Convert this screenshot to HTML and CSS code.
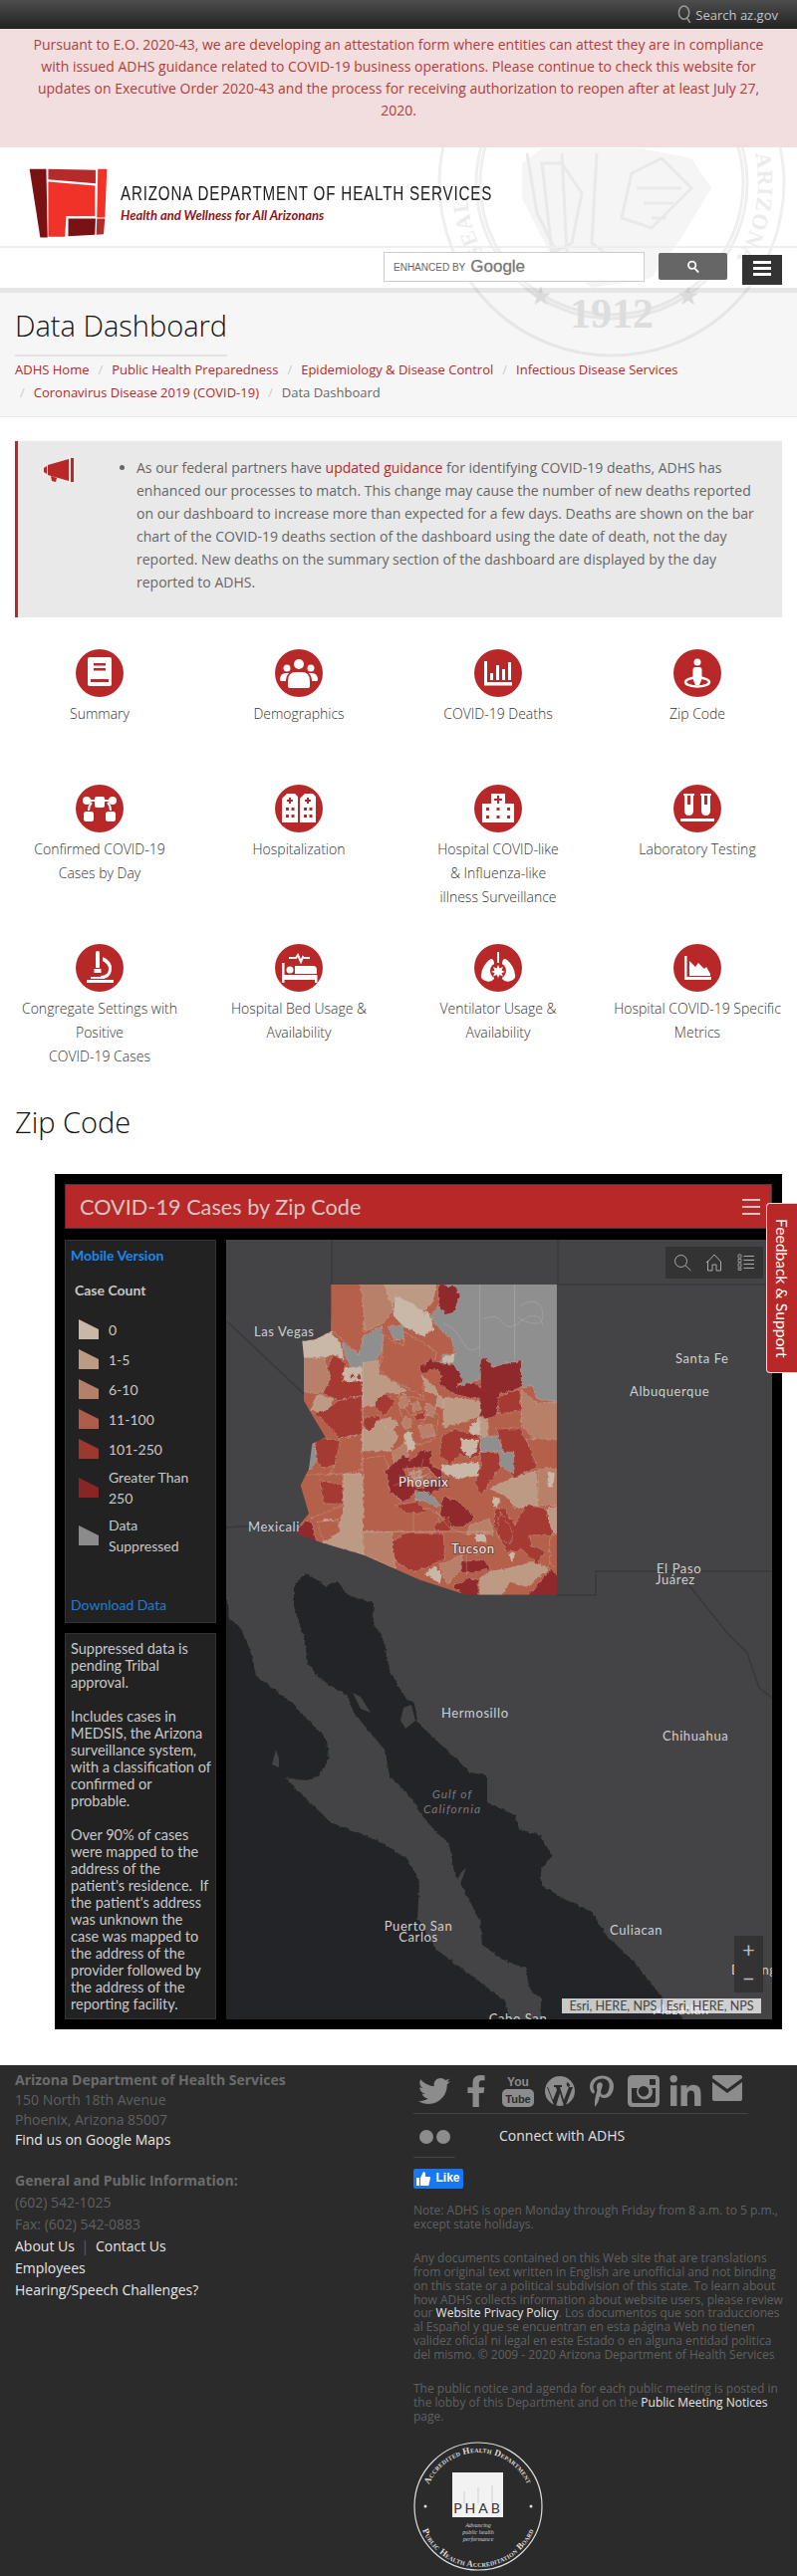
FILE: index.html
```html
<!DOCTYPE html>
<html lang="en">
<head>
    <meta charset="UTF-8">
    <meta name="viewport" content="width=device-width, initial-scale=1.0">
    <title>Data Dashboard</title>
    <link rel="stylesheet" href="styles.css">
</head>
<body>
    <div class="topbar">
        <svg class="topbar-icon" viewBox="0 0 16 20"><ellipse cx="7" cy="8" rx="5.5" ry="7"/><path d="M10.5 14l3 5"/></svg>
        <span>Search az.gov</span>
    </div>

    <div class="alert">
        <p>Pursuant to E.O. 2020-43, <a href="#">we are developing an attestation form where entities can attest they are in compliance with issued ADHS guidance related to COVID-19 business operations. Please continue to check this website for updates on Executive Order 2020-43 and the process for receiving authorization to reopen after at least July 27, 2020.</a></p>
    </div>

    <div class="masthead">
        <svg class="seal-mark" viewBox="0 0 360 360">
            <defs>
                <path id="seal-left" d="M52 252A146 146 0 0 1 38 150"/>
                <path id="seal-right" d="M324 150A146 146 0 0 1 298 266"/>
            </defs>
            <circle cx="180" cy="180" r="173"/>
            <circle cx="180" cy="180" r="136"/>
            <circle cx="180" cy="180" r="132"/>
            <text class="seal-ring-text"><textPath href="#seal-left">SEAL</textPath></text>
            <text class="seal-ring-text"><textPath href="#seal-right">ARIZONA</textPath></text>
            <path class="seal-scene" d="M90 160l20-15 100 0 50 10 20 30-30 50-30 40-60 10-40-30-30-60z"/>
            <path class="seal-detail" d="M95 150l10 60 30 60M130 150l5 100M165 150l-5 90 40 30M200 170l30-15 30 30-40 40-30-10zM205 185h45M212 200h30M220 215h15M110 160l20 0 20 30-10 50-20 10z"/>
            <text class="seal-year" x="180" y="325" text-anchor="middle">1912</text>
            <text class="seal-star" x="108" y="302" text-anchor="middle">★</text>
            <text class="seal-star" x="256" y="302" text-anchor="middle">★</text>
        </svg>

        <div class="brand">
            <svg class="brand-logo" viewBox="20 30 245 214">
                <polygon fill="#7a1214" points="28,35 78,35 82,240 60,240"/>
                <polygon fill="#b52b2b" points="84,35 226,38 226,78 84,66"/>
                <polygon fill="#f03228" points="84,73 224,85 224,176 138,176 134,238 84,238"/>
                <polygon fill="#f03228" points="233,35 260,35 254,180 230,180"/>
                <polygon fill="#7a1214" points="144,183 226,183 224,232 144,236"/>
                <polygon fill="#b52b2b" points="230,183 254,183 250,230 228,232"/>
            </svg>
            <div class="brand-text">
                <div class="brand-name">ARIZONA DEPARTMENT OF HEALTH SERVICES</div>
                <div class="brand-tag">Health and Wellness for All Arizonans</div>
            </div>
        </div>

        <div class="search-row">
            <div class="search-input"><span class="enhanced">ENHANCED BY</span> <span class="google">Google</span></div>
            <button class="search-btn" type="button">
                <svg viewBox="0 0 16 16" width="14" height="14"><circle cx="6.5" cy="6" r="4.2"/><path d="M9.5 9.5l4.5 5"/></svg>
            </button>
            <button class="menu-btn" type="button"><span></span><span></span><span></span></button>
        </div>

        <div class="title-band">
            <h1>Data Dashboard</h1>
            <div class="crumbs">
                <a href="#">ADHS Home</a><i>/</i><a href="#">Public Health Preparedness</a><i>/</i><a href="#">Epidemiology &amp; Disease Control</a><i>/</i><a href="#">Infectious Disease Services</a><br>
                <i class="first">/</i><a href="#">Coronavirus Disease 2019 (COVID-19)</a><i>/</i><span>Data Dashboard</span>
            </div>
        </div>
    </div>

    <div class="notice">
        <svg class="notice-icon" viewBox="0 0 31 24"><path d="M0 10l3-2v8l-3-2zM4 7l21-6v22l-21-6zM7 18l6 2-1 4-4-1zM27 0h3v24h-3z"/></svg>
        <ul>
            <li>As our federal partners have <a href="#">updated guidance</a> for identifying COVID-19 deaths, ADHS has enhanced our processes to match. This change may cause the number of new deaths reported on our dashboard to increase more than expected for a few days. Deaths are shown on the bar chart of the COVID-19 deaths section of the dashboard using the date of death, not the day reported. New deaths on the summary section of the dashboard are displayed by the day reported to ADHS.</li>
        </ul>
    </div>

    <div class="tiles">
        <a class="tile" href="#">
            <svg class="tile-icon" viewBox="0 0 48 48"><circle class="disc" cx="24" cy="24" r="24"/><path class="ink" d="M14 8h20q2 0 2 2v25q0 2-2 2H14q-2 0-2-2V10q0-2 2-2z"/><path class="cut" d="M18 14h12v2.500H18zM18 19h12v2.500H18zM15 30h18v3H15z"/></svg>
            <span>Summary</span>
        </a>
        <a class="tile" href="#">
            <svg class="tile-icon" viewBox="0 0 48 48"><circle class="disc" cx="24" cy="24" r="24"/><circle class="ink" cx="24" cy="15" r="5"/><circle class="ink" cx="12" cy="19" r="3.500"/><circle class="ink" cx="36" cy="19" r="3.500"/><path class="ink" d="M5 31q0-7 6-7h3q-3 3-3 8H7q-2 0-2-1zM43 31q0-7-6-7h-3q3 3 3 8h4q2 0 2-1zM13 37v-5q0-9 8-9h6q8 0 8 9v5q0 2-2 2H15q-2 0-2-2z"/></svg>
            <span>Demographics</span>
        </a>
        <a class="tile" href="#">
            <svg class="tile-icon" viewBox="0 0 48 48"><circle class="disc" cx="24" cy="24" r="24"/><path class="ink" d="M10 12h3v21h25v3.500H10zM16 24h3v7h-3zM22 16h3v15h-3zM28 20h3v11h-3zM34 13h3v18h-3z"/></svg>
            <span>COVID-19 Deaths</span>
        </a>
        <a class="tile" href="#">
            <svg class="tile-icon" viewBox="0 0 48 48"><circle class="disc" cx="24" cy="24" r="24"/><circle class="ink" cx="24" cy="13" r="3.500"/><path class="ink" d="M22 18h4q2.500 0 2.500 2.500V30L26 36h-4l-2.500-6v-9.500Q19.500 18 22 18z"/><ellipse class="ring" cx="24" cy="33" rx="12" ry="4.500"/></svg>
            <span>Zip Code</span>
        </a>

        <a class="tile" href="#">
            <svg class="tile-icon" viewBox="0 0 48 48"><circle class="disc" cx="24" cy="24" r="24"/><rect class="ink" x="19" y="12" width="10" height="11" rx="2"/><circle class="ink" cx="11" cy="16" r="4"/><circle class="ink" cx="37" cy="16" r="4"/><rect class="ink" x="8" y="27" width="10" height="10" rx="2.500"/><rect class="ink" x="30" y="27" width="10" height="10" rx="2.500"/><path class="line" d="M15 16h4M29 16h4M16 18q-3 3-3 8M32 18q3 3 3 8"/></svg>
            <span>Confirmed COVID-19<br>Cases by Day</span>
        </a>
        <a class="tile" href="#">
            <svg class="tile-icon" viewBox="0 0 48 48"><circle class="disc" cx="24" cy="24" r="24"/><path class="ink" d="M9 12l3-3h8l3 3v26H7V14zM27 12l3-3h8l3 3v26H25V14z"/><path class="cut" d="M14 13h2v2h2v2h-2v2h-2v-2h-2v-2h2zM32 13h2v2h2v2h-2v2h-2v-2h-2v-2h2zM11 23h3v3h-3zM16.500 23h3v3h-3zM11 30h3v3h-3zM16.500 30h3v3h-3zM29 23h3v3h-3zM34.500 23h3v3h-3zM29 30h3v3h-3zM34.500 30h3v3h-3z"/></svg>
            <span>Hospitalization</span>
        </a>
        <a class="tile" href="#">
            <svg class="tile-icon" viewBox="0 0 48 48"><circle class="disc" cx="24" cy="24" r="24"/><path class="ink" d="M17 9h14v10h9v19H8V19h9z"/><path class="cut" d="M23 11h2v3h3v2h-3v3h-2v-3h-3v-2h3zM12 23h3v3h-3zM22.500 23h3v3h-3zM33 23h3v3h-3zM12 31h3v3h-3zM22.500 31h3v3h-3zM33 31h3v3h-3z"/></svg>
            <span>Hospital COVID-like<br>&amp; Influenza-like<br>illness Surveillance</span>
        </a>
        <a class="tile" href="#">
            <svg class="tile-icon" viewBox="0 0 48 48"><circle class="disc" cx="24" cy="24" r="24"/><path class="ink" d="M10 9h11v2h-1v15q0 5-4.500 5T11 26V11h-1zM27 9h11v2h-1v15q0 5-4.500 5T28 26V11h-1zM7 34h34v3H7z"/><path class="cut" d="M14 11h3v9h-3zM31 11h3v9h-3z"/></svg>
            <span>Laboratory Testing</span>
        </a>

        <a class="tile" href="#">
            <svg class="tile-icon" viewBox="0 0 48 48"><circle class="disc" cx="24" cy="24" r="24"/><path class="ink" d="M20 9q0-2 2-2t2 2v15h-4zM18.500 25h7v4h-7zM27 13q10 4 9 13t-11 9v-3q8 0 8-7 0-5-6-8zM11 36h27v3H11z"/><path class="ink" d="M15 33h14v2H15z"/></svg>
            <span>Congregate Settings with<br>Positive<br>COVID-19 Cases</span>
        </a>
        <a class="tile" href="#">
            <svg class="tile-icon" viewBox="0 0 48 48"><circle class="disc" cx="24" cy="24" r="24"/><path class="line" d="M14 14h7l2-3 3 7 2-5 1 1h6"/><path class="ink" d="M7 19h2.500v12h32q1 0 1 1v7H40v-3H9.500v3H7z"/><circle class="ink" cx="15" cy="26" r="3.500"/><path class="ink" d="M20 22h18q4 0 4 4v4H20z"/></svg>
            <span>Hospital Bed Usage &amp;<br>Availability</span>
        </a>
        <a class="tile" href="#">
            <svg class="tile-icon" viewBox="0 0 48 48"><circle class="disc" cx="24" cy="24" r="24"/><path class="line" d="M24 8v11"/><path class="ink" d="M15 16q4-3 5 3v16q-3 4-9 2-5-2-4-6 1-9 8-15zM33 16q-4-3-5 3v16q3 4 9 2 5-2 4-6-1-9-8-15z"/><circle class="cut" cx="24" cy="27" r="8"/><path class="ink" d="M24 21l1.500 3.500 3.500-1.500-1.500 3.500L31 28l-3.500 1 1.500 3.500-3.500-1.500L24 34l-1.500-3-3.500 1.500 1.500-3.500L17 28l3.500-1.500L19 23l3.500 1.500z"/></svg>
            <span>Ventilator Usage &amp;<br>Availability</span>
        </a>
        <a class="tile" href="#">
            <svg class="tile-icon" viewBox="0 0 48 48"><circle class="disc" cx="24" cy="24" r="24"/><path class="ink" d="M11 12h2.500v21H38v3H11zM16 17l6 6 3-4 6 6 2-2 4 7v2H16z"/></svg>
            <span>Hospital COVID-19 Specific<br>Metrics</span>
        </a>
    </div>

    <h2 class="section-title">Zip Code</h2>

    <div class="embed">
        <div class="embed-header">
            <span>COVID-19 Cases by Zip Code</span>
            <div class="embed-menu"><i></i><i></i><i></i></div>
        </div>
        <div class="embed-body">
            <div class="side">
                <div class="panel legend">
                    <a class="mobile-link" href="#">Mobile Version</a>
                    <div class="legend-title">Case Count</div>
                    <div class="legend-row"><i class="swatch s0"></i><span>0</span></div>
                    <div class="legend-row"><i class="swatch s1"></i><span>1-5</span></div>
                    <div class="legend-row"><i class="swatch s2"></i><span>6-10</span></div>
                    <div class="legend-row"><i class="swatch s3"></i><span>11-100</span></div>
                    <div class="legend-row"><i class="swatch s4"></i><span>101-250</span></div>
                    <div class="legend-row tall"><i class="swatch s5"></i><span>Greater Than<br>250</span></div>
                    <div class="legend-row tall"><i class="swatch s6"></i><span>Data<br>Suppressed</span></div>
                    <a class="download-link" href="#">Download Data</a>
                </div>
                <div class="panel notes">
                    <p>Suppressed data is<br>pending Tribal<br>approval.</p>
                    <p>Includes cases in<br>MEDSIS, the Arizona<br>surveillance system,<br>with a classification of<br>confirmed or<br>probable.</p>
                    <p>Over 90% of cases<br>were mapped to the<br>address of the<br>patient's residence.&nbsp; If<br>the patient's address<br>was unknown the<br>case was mapped to<br>the address of the<br>provider followed by<br>the address of the<br>reporting facility.</p>
                </div>
            </div>

            <div class="map">
                <svg class="map-svg" viewBox="227 1245 548 783" width="548" height="783">
                    <defs>
                        <filter id="rough" x="-5%" y="-5%" width="110%" height="110%" color-interpolation-filters="sRGB">
                            <feTurbulence type="fractalNoise" baseFrequency="0.2" numOctaves="3" seed="4"/>
                            <feDisplacementMap in="SourceGraphic" scale="4" xChannelSelector="R" yChannelSelector="G"/>
                        </filter>
                        <filter id="rough-az" x="-5%" y="-5%" width="110%" height="110%" color-interpolation-filters="sRGB">
                            <feTurbulence type="fractalNoise" baseFrequency="0.08" numOctaves="4" seed="9"/>
                            <feDisplacementMap in="SourceGraphic" scale="14" xChannelSelector="R" yChannelSelector="G"/>
                        </filter>
                        <clipPath id="az-clip">
                            <polygon points="22,15 702,15 702,950 430,950 290,905 120,830 0,795 -85,765 -70,735 -45,705 -70,620 -45,570 -35,495 5,475 -25,425 -60,365 -60,235 -65,185 -25,180 22,155"/>
                        </clipPath>
                    </defs>

                    <!-- sea -->
                    <g class="sea" filter="url(#rough)">
                        <polygon points="307,1580 295,1593 295,1613 306,1647 309,1670 320,1685 349,1703 355,1720 374,1743 386,1757 391,1783 416,1810 426,1827 451,1853 456,1880 472,1910 482,1930 484,1953 503,1967 528,1977 531,1997 543,2007 543,2030 688,2030 660,2000 636,1970 608,1943 594,1920 566,1907 543,1893 543,1877 554,1863 542,1843 521,1837 517,1823 489,1810 489,1783 472,1780 451,1760 419,1730 416,1710 405,1703 391,1677 386,1650 374,1627 375,1610 349,1602 339,1588 328,1593"/>
                        <polygon points="220,1620 241,1633 251,1657 257,1683 293,1710 328,1747 330,1767 321,1783 307,1788 286,1785 311,1810 332,1830 356,1840 377,1847 409,1867 421,1890 419,1927 437,1957 472,1983 507,2010 512,2030 220,2030"/>
                        <polygon points="220,1600 229,1607 230,1640 220,1640"/>
                    </g>
                    <g class="land">
                        <polygon points="354,1700 362,1704 372,1720 362,1716"/>
                        <polygon points="405,1715 413,1712 417,1728 407,1736 402,1728"/>
                        <polygon points="277,1757 280,1766 280,1775 273,1772"/>
                        <polygon points="463,1880 468,1876 462,1892 458,1890"/>
                    </g>

                    <!-- boundaries -->
                    <path class="boundary" d="M333 1245V1290M560 1245V1290H775M228 1327L305 1400M227 1534L298 1530M559 1602H598V1578H775M690 1590L730 1640 750 1660 762 1695 775 1705"/>

                    <!-- Arizona, drawn in zip areas -->
                    <g transform="translate(325 1285) scale(.3333)" clip-path="url(#az-clip)">
                        <g class="zips" filter="url(#rough-az)">
                            <rect class="c3" x="-100" y="0" width="820" height="960"/>
                            <polygon class="c3" points="10,5 110,5 130,60 120,150 115,200 105,225 60,185 22,150"/>
                            <polygon class="c2" points="110,5 180,5 210,90 180,130 125,155 120,100"/>
                            <polygon class="c1" points="180,5 340,5 330,65 300,100 250,70 215,50 205,80"/>
                            <polygon class="c0" points="215,50 260,70 300,100 320,100 330,150 300,170 240,140 210,110"/>
                            <polygon class="c6" points="55,190 105,225 120,170 175,140 180,200 165,235 125,265 85,265 65,230"/>
                            <polygon class="c6" points="190,140 240,140 245,180 215,180"/>
                            <polygon class="c0" points="-80,185 -25,180 22,155 55,205 60,240 30,225 -30,240 -80,240"/>
                            <polygon class="c0" points="55,265 115,265 115,305 60,305"/>
                            <polygon class="c4" points="75,295 85,280 95,295"/>
                            <polygon class="c4" points="100,295 110,285 113,300"/>
                            <polygon class="c3" points="180,165 215,190 240,200 245,160 300,190 340,220 330,260 290,265 300,300 300,355 260,330 200,300 165,270 175,235"/>
                            <polygon class="c6" points="340,90 375,5 720,5 720,370 640,360 630,320 595,325 595,245 535,255 505,265 485,235 470,300 440,310 410,325 415,295 350,250 360,225 395,225 385,180 340,140 320,110"/>
                            <polygon class="c5" points="345,5 375,20 395,20 410,50 390,100 370,105 345,80"/>
                            <polygon class="c1" points="115,250 165,245 170,285 230,320 250,335 220,345 190,340 160,380 115,385"/>
                            <polygon class="c1" points="360,355 470,365 470,415 360,445"/>
                            <polygon class="c0" points="440,445 470,415 470,470 440,470"/>
                            <polygon class="c1" points="115,450 175,420 225,470 200,515 115,520"/>
                            <polygon class="c3" points="225,350 300,360 345,410 340,480 280,500 240,440"/>
                            <polygon class="c2" points="240,345 262,365 240,390 222,372"/>
                            <polygon class="c2" points="262,372 285,365 292,390 270,402"/>
                            <polygon class="c2" points="310,370 338,385 330,415 305,405"/>
                            <polygon class="c2" points="245,410 268,425 255,450 235,440"/>
                            <polygon class="c4" points="272,410 305,395 305,420 278,422"/>
                            <polygon class="c2" points="285,440 325,435 335,470 295,480"/>
                            <polygon class="c1" points="170,425 205,415 225,440 195,460"/>
                            <polygon class="c5" points="472,245 490,235 510,265 535,255 595,245 595,325 565,335 530,345 520,410 490,420 472,410 470,360 430,355 395,345 355,320 345,310 360,290 335,270 295,285 290,265 320,240 355,255 390,255 420,300 400,325 445,310 472,325"/>
                            <polygon class="c4" points="155,365 185,345 215,365 185,410 155,385"/>
                            <polygon class="c4" points="120,415 170,410 150,445 130,460 120,440"/>
                            <polygon class="c1" points="340,340 360,360 360,385 340,385"/>
                            <polygon class="c1" points="295,290 340,330 345,350 310,340"/>
                            <polygon class="c1" points="470,415 495,420 495,475 470,470"/>
                            <polygon class="c4" points="355,470 400,450 470,475 470,530 440,540 410,525 380,555 350,530"/>
                            <polygon class="c0" points="415,480 465,480 460,520 435,535 415,510"/>
                            <polygon class="c0" points="240,465 265,460 275,510 250,515"/>
                            <polygon class="c2" points="205,520 250,490 255,530 215,570"/>
                            <polygon class="c0" points="360,235 390,225 392,250 358,250"/>
                            <polygon class="c4" points="10,270 30,225 65,255 55,305 115,308 115,350 45,365 0,345"/>
                            <polygon class="c4" points="-30,400 0,395 45,365 115,350 115,465 50,480 0,425"/>
                            <polygon class="c2" points="-70,235 0,235 20,300 0,340 -70,340"/>
                            <polygon class="c1" points="-20,345 30,360 10,395 -40,395"/>
                            <polygon class="c4" points="-25,480 10,480 75,490 40,530 40,555 0,570 -20,550"/>
                            <polygon class="c6" points="-60,495 -30,490 -20,540 -40,575 -70,560"/>
                            <polygon class="c3" points="50,480 115,465 115,575 60,585 20,590 40,530"/>
                            <polygon class="c3" points="-90,590 60,585 60,680 -40,720 -90,640"/>
                            <polygon class="c4" points="-10,605 55,620 60,675 0,675"/>
                            <polygon class="c1" points="60,585 115,585 120,690 150,690 115,760 120,830 0,795 0,720 50,730 60,680"/>
                            <polygon class="c5" points="-100,770 -50,725 -35,735 -20,800"/>
                            <polygon class="c3" points="-20,730 45,725 50,760 0,790"/>
                            <polygon class="c3" points="118,540 180,530 200,575 200,640 260,690 320,690 350,710 330,760 118,760"/>
                            <polygon class="c2" points="118,760 205,760 215,870 120,830"/>
                            <polygon class="c5" points="185,575 240,530 260,545 295,515 325,520 320,555 355,575 360,620 320,650 275,635 260,660 240,670 200,640"/>
                            <polygon class="c3" points="240,570 310,565 345,600 300,630 260,620"/>
                            <polygon class="c2" points="260,580 290,575 300,610 270,612"/>
                            <polygon class="c4" points="215,680 280,670 310,700 250,705"/>
                            <polygon class="c5" points="360,655 400,665 455,715 420,745 385,745 350,705"/>
                            <polygon class="c4" points="330,745 375,715 385,755 335,755"/>
                            <polygon class="c6" points="275,640 310,640 340,665 350,685 325,680 300,665 275,665"/>
                            <polygon class="c4" points="205,790 240,765 360,765 365,840 320,865 270,880 215,850"/>
                            <polygon class="c0" points="305,885 335,865 355,890 350,915"/>
                            <polygon class="c0" points="355,560 410,555 465,550 470,590 400,600 355,580"/>
                            <polygon class="c4" points="520,450 590,450 640,540 640,565 575,600 540,555 500,610 475,650 455,610 475,560 470,520 540,520 530,480"/>
                            <polygon class="c6" points="472,475 525,470 540,515 472,520"/>
                            <polygon class="c6" points="530,520 572,520 572,585 530,560"/>
                            <polygon class="c1" points="500,630 560,600 640,575 645,680 580,690 545,650"/>
                            <polygon class="c0" points="510,655 530,660 525,685 510,680"/>
                            <polygon class="c2" points="595,330 640,370 720,370 720,480 640,490 595,440"/>
                            <polygon class="c3" points="610,480 720,480 720,570 645,570"/>
                            <polygon class="c2" points="645,570 720,570 720,680 645,680"/>
                            <polygon class="c0" points="675,580 695,580 690,625 675,620"/>
                            <polygon class="c1" points="672,690 720,680 720,770 680,760"/>
                            <polygon class="c4" points="515,690 545,690 575,740 610,680 670,690 690,770 620,770 625,800 670,820 640,855 600,815 550,820 515,750"/>
                            <polygon class="c2" points="350,860 420,830 410,880 370,920"/>
                            <polygon class="c5" points="415,850 480,845 505,870 450,885 415,880"/>
                            <polygon class="c5" points="390,925 440,900 465,905 465,960 430,960"/>
                            <polygon class="c1" points="500,880 560,870 620,850 680,870 610,925 560,910 530,960 470,960 470,900"/>
                            <polygon class="c2" points="440,740 500,720 510,770 470,760 430,770"/>
                            <polygon class="c0" points="455,765 485,765 490,790 460,790"/>
                            <polygon class="c0" points="555,825 575,825 570,850"/>
                            <polygon class="c3" points="680,770 720,770 720,870 680,860"/>
                            <polygon class="c5" points="610,960 660,900 685,870 720,920 720,960"/>
                            <polygon class="c4" points="525,355 590,330 595,395 560,400 525,405"/>
                            <polygon class="c4" points="530,700 570,760 560,800 520,770"/>
                        </g>
                        <path class="zip-lines" d="M470 15V230M575 15V240M480 120q40-20 60 10t60-10q50-30 60 20M360 130q40 20 60 60t50 10M590 80q30-20 50-10t20 40-40 20-30-20M118 760H510M270 700v60M118 250V520M225 590l60 10 40-20M240 600l30-20 20 40 30-30 10 30M250 560l20 70M300 540l-20 90M210 620l100-30M340 700l40 50 60 20M400 800l60 30 30-20M430 830v60M240 380l20 30 40-10M320 400l-40 50M260 585l15 20 10-15 15 25 15-20M245 595l60-25M255 610l55-20M270 570l5 50M285 565l5 55"/>
                    </g>

                    <text class="city" x="255" y="1342">Las Vegas</text>
                    <text class="city" x="249" y="1538">Mexicali</text>
                    <text class="city halo" x="400" y="1493">Phoenix</text>
                    <text class="city halo" x="453" y="1560">Tucson</text>
                    <text class="city" x="678" y="1369">Santa Fe</text>
                    <text class="city" x="632" y="1402">Albuquerque</text>
                    <text class="city" x="659" y="1580">El Paso</text>
                    <text class="city" x="658" y="1591">Juárez</text>
                    <text class="city" x="443" y="1725">Hermosillo</text>
                    <text class="city" x="665" y="1748">Chihuahua</text>
                    <text class="water" x="454" y="1806">Gulf of</text>
                    <text class="water" x="454" y="1821">California</text>
                    <text class="city mid" x="420" y="1939">Puerto San</text>
                    <text class="city mid" x="420" y="1950">Carlos</text>
                    <text class="city" x="612" y="1943">Culiacan</text>
                    <text class="city mid" x="520" y="2032">Cabo San</text>
                    <text class="city" x="655" y="2023">Mazatlán</text>
                    <text class="city" x="734" y="1983">Durango</text>
                </svg>

                <div class="map-tools">
                    <svg viewBox="0 0 18 18" width="18" height="18"><circle cx="7.500" cy="7.500" r="6"/><path d="M12 12l5.500 5"/></svg>
                    <svg viewBox="0 0 18 18" width="18" height="18"><path d="M2.500 17V8L9 1l6.500 7v9h-4.500v-6H7v6zM1 9l2-2"/></svg>
                    <svg viewBox="0 0 18 18" width="18" height="18"><path d="M6.500 2.500H17M6.500 6.500H17M6.500 10.500H17M6.500 14.500H17"/><path class="dots" d="M1 1h3v3H1zM1 5.500h3v3H1zM1 10h3v3H1zM1 14.500h3v2H1z"/></svg>
                </div>
                <div class="map-zoom"><span>+</span><span>−</span></div>
                <div class="map-credit">Esri, HERE, NPS | Esri, HERE, NPS</div>
            </div>
        </div>
    </div>

    <a class="feedback" href="#"><span>Feedback &amp; Support</span></a>

    <footer class="footer">
        <div class="footer-left">
            <div class="address">
                <strong>Arizona Department of Health Services</strong><br>
                150 North 18th Avenue<br>
                Phoenix, Arizona 85007<br>
                <a href="#">Find us on Google Maps</a>
            </div>
            <div class="contact">
                <strong>General and Public Information:</strong><br>
                (602) 542-1025<br>
                Fax: (602) 542-0883<br>
                <a href="#">About Us</a> <i>|</i> <a href="#">Contact Us</a><br>
                <a href="#">Employees</a><br>
                <a href="#">Hearing/Speech Challenges?</a>
            </div>
        </div>
        <div class="footer-right">
            <div class="social">
                <svg viewBox="0 0 512 512" width="32" height="32"><path d="M459.37 151.716c.325 4.548.325 9.097.325 13.645 0 138.72-105.583 298.558-298.558 298.558-59.452 0-114.68-17.219-161.137-47.106 8.447.974 16.568 1.299 25.34 1.299 49.055 0 94.213-16.568 130.274-44.832-46.132-.975-84.792-31.188-98.112-72.772 6.498.974 12.995 1.624 19.818 1.624 9.421 0 18.843-1.3 27.614-3.573-48.081-9.747-84.143-51.98-84.143-102.985v-1.299c13.969 7.797 30.214 12.67 47.431 13.319-28.264-18.843-46.781-51.005-46.781-87.391 0-19.492 5.197-37.36 14.294-52.954 51.655 63.675 129.3 105.258 216.365 109.807-1.624-7.797-2.599-15.918-2.599-24.04 0-57.828 46.782-104.934 104.934-104.934 30.213 0 57.502 12.67 76.67 33.137 23.715-4.548 46.456-13.32 66.599-25.34-7.798 24.366-24.366 44.833-46.132 57.827 21.117-2.273 41.584-8.122 60.426-16.243-14.292 20.791-32.161 39.308-52.628 54.253z"/></svg>
                <svg viewBox="0 0 320 512" width="20" height="32"><path d="M279.14 288l14.22-92.66h-88.91v-60.13c0-25.35 12.42-50.06 52.24-50.06h40.42V6.26S260.43 0 225.36 0c-73.22 0-121.08 44.38-121.08 124.72v70.62H22.89V288h81.39v224h100.17V288z"/></svg>
                <svg viewBox="0 0 32 32" width="32" height="32"><rect x="0" y="14" width="32" height="18" rx="5"/><text class="yt-you" x="16" y="11" text-anchor="middle">You</text><text class="yt-tube" x="16" y="28" text-anchor="middle">Tube</text></svg>
                <svg viewBox="0 0 32 32" width="32" height="32"><circle cx="16" cy="16" r="15"/><path class="wp-cut" d="M3 12l7 18 2 1 4-13 4 13 2-1 7-18h-4l-5 13-4-13h2v-2h-8v2h2l1 3-4 10-5-13z"/><path class="wp-cut" d="M23 7q3 1 3 4l-2 1q-2-2-1-5z"/></svg>
                <svg viewBox="0 0 384 512" width="24" height="32"><path d="M204 6.500C101.400 6.500 0 74.900 0 185.600 0 256 39.600 296 63.600 296c9.900 0 15.600-27.600 15.600-35.400 0-9.300-23.700-29.100-23.700-67.800 0-80.400 61.200-137.400 140.400-137.400 68.100 0 118.500 38.700 118.500 109.800 0 53.100-21.300 152.700-90.300 152.700-24.900 0-46.200-18-46.200-43.800 0-37.800 26.400-74.400 26.400-113.400 0-66.200-93.900-54.200-93.900 25.800 0 16.800 2.100 35.400 9.600 50.700-13.800 59.400-42 147.900-42 209.100 0 18.900 2.700 37.500 4.500 56.400 3.400 3.800 1.700 3.400 6.900 1.500 50.400-69 48.600-82.500 71.400-172.800 12.300 23.400 44.100 36 69.300 36 106.200 0 153.900-103.500 153.900-196.800C384 71.300 298.200 6.500 204 6.500z"/></svg>
                <svg viewBox="0 0 32 32" width="32" height="32"><path fill-rule="evenodd" d="M5 0h22q5 0 5 5v22q0 5-5 5H5q-5 0-5-5V5q0-5 5-5zM4 13v13q0 2 2 2h20q2 0 2-2V13h-4q1 1.500 1 3.500a8 8 0 0 1-16 0q0-2 1-3.500zM16 11a5.200 5.200 0 1 0 .01 0zM22 4v5q0 1 1 1h4q1 0 1-1V5q0-1-1-1z"/></svg>
                <svg viewBox="0 0 448 448" width="31" height="31"><path d="M100.280 448H7.400V148.900h92.880zM53.790 108.100C24.090 108.100 0 83.500 0 53.800a53.790 53.790 0 0 1 107.580 0c0 29.700-24.100 54.300-53.790 54.300zM447.900 448h-92.680V302.400c0-34.700-.7-79.200-48.290-79.200-48.290 0-55.690 37.700-55.690 76.700V448h-92.780V148.900h89.080v40.800h1.300c12.400-23.500 42.690-48.300 87.880-48.300 94 0 111.280 61.900 111.280 142.300V448z"/></svg>
                <svg viewBox="0 0 30 26" width="30" height="26"><path d="M2 0h26q2 0 2 2v1L15 14 0 3V2q0-2 2-2zM0 7l15 11L30 7v17q0 2-2 2H2q-2 0-2-2z"/></svg>
            </div>
            <div class="connect">
                <div class="flickr"><i></i><i></i></div>
                <span>Connect with ADHS</span>
            </div>
            <div class="like">
                <svg viewBox="0 0 14 14" width="14" height="14"><path d="M0 6h3v8H0zM4 6l3-6q2 0 2 2v3h4q1 0 1 1l-1.500 7q0 1-1 1H4z"/></svg>
                <span>Like</span>
            </div>
            <p>Note: ADHS is open Monday through Friday from 8 a.m. to 5 p.m., except state holidays.</p>
            <p>Any documents contained on this Web site that are translations from original text written in English are unofficial and not binding on this state or a political subdivision of this state. To learn about how ADHS collects information about website users, please review our <a href="#">Website Privacy Policy</a>. Los documentos que son traducciones al Español y que se encuentran en esta página Web no tienen validez oficial ni legal en este Estado o en alguna entidad politica del mismo. © 2009 - 2020 Arizona Department of Health Services</p>
            <p>The public notice and agenda for each public meeting is posted in the lobby of this Department and on the <a href="#">Public Meeting Notices</a> page.</p>
            <svg class="phab" viewBox="0 0 130 130" width="130" height="130">
                <defs>
                    <path id="phab-top" d="M11 65a54 54 0 0 1 108 0"/>
                    <path id="phab-bottom" d="M4 65a61 61 0 0 0 122 0"/>
                </defs>
                <circle class="phab-ring" cx="65" cy="65" r="64"/>
                <text class="phab-ring-text"><textPath href="#phab-top" startOffset="50%" text-anchor="middle">Accredited Health Department</textPath></text>
                <text class="phab-ring-text"><textPath href="#phab-bottom" startOffset="50%" text-anchor="middle">Public Health Accreditation Board</textPath></text>
                <circle class="phab-dot" cx="12" cy="65" r="1.500"/>
                <circle class="phab-dot" cx="118" cy="65" r="1.500"/>
                <rect class="phab-box" x="39" y="31" width="51" height="45"/>
                <path class="phab-bars" d="M51 50V62M65 46V62M79 44V62"/>
                <text class="phab-word" x="65" y="72" text-anchor="middle">PHAB</text>
                <text class="phab-sub" x="65" y="86" text-anchor="middle">Advancing</text>
                <text class="phab-sub" x="65" y="93" text-anchor="middle">public health</text>
                <text class="phab-sub" x="65" y="100" text-anchor="middle">performance</text>
            </svg>
        </div>
    </footer>
</body>
</html>
```
FILE: styles.css
```css
body {
    margin: 0;
    font-family: "Open Sans", sans-serif;
    font-size: 14px;
    color: #333;
    background: #fff;
    position: relative;
}
a {
    color: #b92828;
    text-decoration: none;
}

/* top bar */
.topbar {
    height: 29px;
    display: flex;
    align-items: center;
    justify-content: flex-end;
    padding-right: 19px;
    background: linear-gradient(#4d4d4d, #222);
    color: #c4c4c4;
    font-size: 13px;
}
.topbar-icon {
    width: 15px;
    height: 19px;
    margin-right: 3px;
    fill: none;
    stroke: #999;
    stroke-width: 1.6;
}

/* alert */
.alert {
    height: 119px;
    box-sizing: border-box;
    padding: 5px 30px 0;
    background: #f2dede;
    color: #a94442;
    text-align: center;
    line-height: 22px;
}
.alert p {
    margin: 0;
}
.alert a {
    color: #b23c3a;
}

/* masthead */
.masthead {
    position: relative;
    overflow: hidden;
}
.seal-mark {
    position: absolute;
    left: 434px;
    top: -144px;
    width: 360px;
    height: 360px;
    fill: none;
    stroke: #efefef;
    stroke-width: 3;
}
.seal-ring-text {
    font-family: "Liberation Serif", serif;
    font-size: 22px;
    font-weight: bold;
    letter-spacing: 1px;
    fill: #ececec;
    stroke: none;
}
.seal-scene {
    fill: #f5f5f5;
    stroke: none;
}
.seal-detail {
    stroke: #e9e9e9;
    stroke-width: 3;
}
.seal-year {
    font-family: "Liberation Serif", serif;
    font-size: 42px;
    font-weight: bold;
    fill: #e6e6e6;
    stroke: none;
}
.seal-star {
    font-size: 26px;
    fill: #e4e4e4;
    stroke: none;
}
.brand {
    position: relative;
    height: 99px;
    box-sizing: border-box;
    display: flex;
    align-items: center;
    padding: 13px 0 0 27px;
}
.brand-logo {
    width: 82px;
    height: 72px;
    margin-right: 12px;
}
.brand-name {
    font-family: "Liberation Sans", sans-serif;
    font-size: 20px;
    line-height: 24px;
    letter-spacing: 1.1px;
    color: #1c1c1c;
    white-space: nowrap;
    transform: scaleX(0.758);
    transform-origin: left center;
}
.brand-tag {
    font-family: Lato, sans-serif;
    font-size: 13px;
    font-style: italic;
    font-weight: 700;
    line-height: 20px;
    color: #8a1618;
}
.search-row {
    position: relative;
    height: 42px;
    box-sizing: border-box;
    border-top: 2px solid #eee;
    display: flex;
    align-items: flex-start;
    padding-left: 385px;
}
.search-input {
    width: 262px;
    height: 30px;
    box-sizing: border-box;
    margin-top: 4px;
    border: 1px solid #ccc;
    background: #fff;
    padding: 0 9px;
    display: flex;
    align-items: center;
    gap: 5px;
    font-family: "Liberation Sans", sans-serif;
}
.enhanced {
    font-size: 10px;
    color: #666;
}
.google {
    font-size: 17px;
    color: #777;
    -webkit-text-stroke: 0.3px #777;
}
.search-btn {
    width: 69px;
    height: 27px;
    margin: 5px 0 0 14px;
    padding: 0;
    border: none;
    border-radius: 2px;
    background: #666;
}
.search-btn svg {
    display: block;
    margin: auto;
    fill: none;
    stroke: #fff;
    stroke-width: 2;
}
.menu-btn {
    width: 40px;
    height: 30px;
    margin: 7px 0 0 15px;
    padding: 6px 0 0;
    border: none;
    background: #333;
    display: flex;
    flex-direction: column;
    align-items: center;
    gap: 3px;
}
.menu-btn span {
    width: 18px;
    height: 3px;
    background: #fff;
}
.title-band {
    position: relative;
    height: 130px;
    box-sizing: border-box;
    border-top: 5px solid rgba(0, 0, 0, 0.06);
    border-bottom: 1px solid rgba(0, 0, 0, 0.05);
    background: rgba(0, 0, 0, 0.035);
    padding: 11px 15px 0;
}
h1 {
    display: inline-block;
    margin: 0;
    padding-bottom: 7px;
    border-bottom: 2px solid #e2e2e2;
    font-size: 29px;
    font-weight: 300;
    line-height: 44px;
    color: #111;
}
.crumbs {
    font-size: 13px;
    line-height: 23px;
    margin-top: 2px;
    color: #666;
    white-space: nowrap;
}
.crumbs i {
    font-style: normal;
    color: #ccc;
    padding: 0 9px;
}
.crumbs i.first {
    padding-left: 5px;
}

/* notice */
.notice {
    margin: 24px 15px 0;
    height: 177px;
    box-sizing: border-box;
    border-left: 3px solid #b92828;
    background: #e9e9e9;
    position: relative;
    padding: 15px 22px 0 119px;
    color: #666;
    line-height: 23px;
}
.notice-icon {
    position: absolute;
    left: 26px;
    top: 17px;
    width: 31px;
    height: 24px;
    fill: #b92828;
}
.notice ul {
    margin: 0;
    padding: 0;
}
.notice a {
    color: #b92828;
}

/* tiles */
.tiles {
    display: grid;
    grid-template-columns: repeat(4, 200px);
    margin-top: 32px;
}
.tile {
    min-height: 136px;
    box-sizing: border-box;
    padding-bottom: 35px;
    display: flex;
    flex-direction: column;
    align-items: center;
    text-align: center;
    color: #333;
    font-weight: 300;
    line-height: 24px;
}
.tile-icon {
    width: 48px;
    height: 48px;
    margin-bottom: 5px;
    flex: none;
}
.disc {
    fill: #b92828;
}
.ink {
    fill: #fff;
}
.cut {
    fill: #b92828;
}
.ring {
    fill: none;
    stroke: #fff;
    stroke-width: 2.5;
}
.line {
    fill: none;
    stroke: #fff;
    stroke-width: 2;
}
.section-title {
    margin: 0 0 33px 15px;
    font-size: 29px;
    font-weight: 300;
    line-height: 38px;
    color: #111;
}

/* dashboard */
.embed {
    margin: 0 15px 36px 55px;
    padding: 10px;
    background: #000;
    font-family: Lato, sans-serif;
}
.embed-header {
    height: 45px;
    box-sizing: border-box;
    border: 1px solid #3a3a3a;
    background: #b92828;
    color: #d2c6c4;
    font-size: 21.7px;
    padding-left: 14px;
    display: flex;
    align-items: center;
    justify-content: space-between;
    margin-bottom: 11px;
}
.embed-menu {
    width: 18px;
    margin-right: 11px;
    display: flex;
    flex-direction: column;
    gap: 5px;
}
.embed-menu i {
    height: 2px;
    background: #d2c6c4;
}
.embed-body {
    display: grid;
    grid-template-columns: 152px 548px;
    gap: 10px;
}
.side {
    display: flex;
    flex-direction: column;
    gap: 10px;
}
.panel {
    box-sizing: border-box;
    border: 1px solid #333;
    background: #222;
    color: #c8c8c8;
    font-size: 14px;
}
.legend {
    height: 385px;
    padding: 6px 5px 8px;
    display: flex;
    flex-direction: column;
}
.mobile-link {
    color: #1b87ea;
    font-weight: 700;
    line-height: 18px;
}
.legend-title {
    margin: 17px 0 15px 4px;
    font-weight: 700;
    line-height: 18px;
}
.legend-row {
    height: 30px;
    display: flex;
    align-items: center;
    padding-left: 8px;
    gap: 10px;
}
.legend-row.tall {
    height: 48px;
    line-height: 21px;
}
.swatch {
    width: 20px;
    height: 20px;
    flex: none;
    clip-path: polygon(0 0, 100% 50%, 100% 100%, 0 100%);
}
.s0 { background: #c9b8a8; }
.s1 { background: #bd9a84; }
.s2 { background: #b58068; }
.s3 { background: #ad5d49; }
.s4 { background: #9c392f; }
.s5 { background: #8a2526; }
.s6 { background: #8b8b8b; }
.download-link {
    margin-top: auto;
    color: #1b7fd8;
    line-height: 18px;
}
.notes {
    height: 388px;
    padding: 6px 0 0 5px;
    font-size: 14.5px;
    line-height: 17px;
    white-space: nowrap;
}
.notes p {
    margin: 0 0 17px;
}

/* map */
.map {
    position: relative;
    height: 783px;
    overflow: hidden;
    background: #444446;
}
.map-svg {
    display: block;
}
.sea polygon {
    fill: #232427;
}
.land polygon {
    fill: #444446;
}
.boundary {
    fill: none;
    stroke: #38383a;
    stroke-width: 1.5;
}
.c0 { fill: #c9b8a8; }
.c1 { fill: #bd9a84; }
.c2 { fill: #b88068; }
.c3 { fill: #b4604a; }
.c4 { fill: #a53a32; }
.c5 { fill: #90292c; }
.c6 { fill: #8f8f8f; }
.zips polygon {
    stroke: rgba(210, 195, 185, 0.5);
    stroke-width: 2;
}
.zip-lines {
    fill: none;
    stroke: rgba(205, 195, 190, 0.45);
    stroke-width: 2;
}
.city {
    font-family: Lato, sans-serif;
    font-size: 13px;
    letter-spacing: 0.6px;
    fill: #cfcfcf;
}
.city.mid {
    text-anchor: middle;
}
.city.halo {
    fill: #efe9e7;
    stroke: rgba(70, 60, 60, 0.55);
    stroke-width: 2;
    paint-order: stroke;
}
.water {
    font-family: Lato, sans-serif;
    font-size: 12px;
    font-style: italic;
    letter-spacing: 1px;
    text-anchor: middle;
    fill: #77777a;
}
.map-tools {
    position: absolute;
    top: 7px;
    right: 9px;
    width: 98px;
    height: 32px;
    box-sizing: border-box;
    background: #333;
    display: flex;
    align-items: center;
    justify-content: space-between;
    padding: 0 8px;
}
.map-tools svg {
    fill: none;
    stroke: #aaa;
    stroke-width: 1;
}
.map-tools .dots {
    stroke-width: 0.8;
}
.map-zoom {
    position: absolute;
    top: 699px;
    right: 9px;
    width: 29px;
    height: 57px;
    background: #333;
    display: flex;
    flex-direction: column;
    align-items: center;
    justify-content: space-around;
    color: #bbb;
    font-size: 22px;
    line-height: 26px;
}
.map-credit {
    position: absolute;
    top: 762px;
    right: 11px;
    width: 200px;
    height: 15px;
    background: rgba(255, 255, 255, 0.75);
    color: #444;
    font-size: 12.500px;
    line-height: 15px;
    text-align: center;
    white-space: nowrap;
}

/* feedback tab, sticks out over the dashboard */
.feedback {
    position: absolute;
    top: 1208px;
    right: 0;
    width: 31px;
    height: 171px;
    box-sizing: border-box;
    border: 1px solid #ddd;
    border-right: none;
    border-radius: 4px 0 0 4px;
    background: #b92828;
    color: #fff;
    font-family: Lato, sans-serif;
    font-size: 15.700px;
    display: flex;
    align-items: center;
    justify-content: center;
}
.feedback span {
    writing-mode: vertical-rl;
    white-space: nowrap;
}

/* footer */
.footer {
    height: 513px;
    box-sizing: border-box;
    background: #2b2b2b;
    color: #606060;
    display: grid;
    grid-template-columns: 400px 400px;
}
.footer a {
    color: #e6e6e6;
}
.footer strong {
    color: #6c6c6c;
}
.footer-left {
    padding: 5px 0 0 15px;
}
.address {
    line-height: 20px;
}
.contact {
    margin-top: 20px;
    line-height: 22px;
}
.contact i {
    font-style: normal;
    padding: 0 3px;
}
.footer-right {
    padding: 10px 10px 0 15px;
    font-size: 12px;
    line-height: 13.900px;
}
.footer-right p {
    margin: 0 0 20px;
}
.social {
    width: 336px;
    height: 39px;
    box-sizing: border-box;
    border-bottom: 1px solid #444;
    display: flex;
}
.social svg {
    width: 42px;
    flex: none;
    fill: #8c8c8c;
}
.yt-you,
.yt-tube {
    font-family: "Liberation Sans", sans-serif;
    font-weight: bold;
}
.yt-you {
    font-size: 12px;
}
.yt-tube {
    font-size: 11px;
    fill: #2b2b2b;
}
.wp-cut {
    fill: #2b2b2b;
}
.connect {
    display: flex;
    align-items: center;
    height: 44px;
    color: #e0e0e0;
    font-size: 14px;
}
.flickr {
    width: 42px;
    height: 44px;
    box-sizing: border-box;
    border-bottom: 1px solid #444;
    display: flex;
    justify-content: center;
    align-items: center;
    gap: 3px;
    margin-right: 44px;
    padding-top: 3px;
}
.flickr i {
    width: 14px;
    height: 14px;
    border-radius: 50%;
    background: #8c8c8c;
}
.like {
    width: 50px;
    height: 20px;
    margin: 11px 0 15px;
    border-radius: 2px;
    background: #1877f2;
    color: #fff;
    font-family: "Liberation Sans", sans-serif;
    font-size: 12px;
    font-weight: bold;
    display: flex;
    align-items: center;
    justify-content: center;
    gap: 5px;
}
.like svg {
    fill: #fff;
}
.phab {
    display: block;
    margin-top: -2px;
}
.phab-ring {
    fill: none;
    stroke: #ddd;
    stroke-width: 1.200;
}
.phab-ring-text {
    font-family: "Liberation Serif", serif;
    font-size: 9px;
    font-variant: small-caps;
    font-weight: bold;
    letter-spacing: 0.2px;
    fill: #ddd;
}
.phab-dot {
    fill: #ddd;
}
.phab-box {
    fill: #f2f2f2;
}
.phab-bars {
    stroke: #bbb;
    stroke-width: 0.6;
}
.phab-word {
    font-family: Lato, sans-serif;
    font-size: 14px;
    letter-spacing: 3px;
    fill: #333;
}
.phab-sub {
    font-family: "Liberation Serif", serif;
    font-size: 6px;
    font-style: italic;
    fill: #ccc;
}
```
